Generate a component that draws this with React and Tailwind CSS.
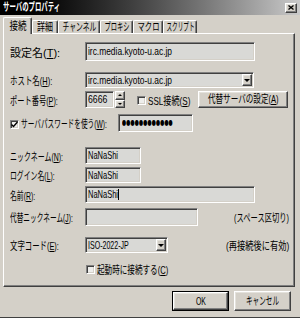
import React, { useLayoutEffect, useRef, useState } from "react";

function Fit({ w, children, className = "", origin = "left" }) {
  const ref = useRef(null);
  const [s, setS] = useState(1);
  useLayoutEffect(() => {
    const el = ref.current;
    if (el && el.offsetWidth) setS(w / el.offsetWidth);
  }, [w]);
  const o = origin === "left" ? "origin-left" : origin === "right" ? "origin-right" : "origin-center";
  return (
    <span ref={ref} className={`inline-block whitespace-nowrap ${o} ${className}`} style={{ transform: `scaleX(${s})` }}>
      {children}
    </span>
  );
}

const sunken =
  "border border-t-[#808080] border-l-[#808080] border-r-white border-b-white shadow-[inset_1px_1px_0_#404040,inset_-1px_-1px_0_#d4d0c8]";
const raised =
  "border border-t-white border-l-white border-r-[#404040] border-b-[#404040] shadow-[inset_-1px_-1px_0_#808080,inset_1px_1px_0_#e4e2dc]";
const field = "bg-[#d9d9d6]";

function U({ children }) {
  return <span className="underline underline-offset-1">{children}</span>;
}

function DownArrow() {
  return <span className="w-0 h-0 border-l-[3px] border-r-[3px] border-t-[3px] border-l-transparent border-r-transparent border-t-black" />;
}
function UpArrow() {
  return <span className="w-0 h-0 border-l-[2px] border-r-[2px] border-b-[2px] border-l-transparent border-r-transparent border-b-black" />;
}
function SmallDown() {
  return <span className="w-0 h-0 border-l-[2px] border-r-[2px] border-t-[2px] border-l-transparent border-r-transparent border-t-black" />;
}

function Check({ checked }) {
  return (
    <div className={`${sunken} w-[9px] h-[9px] bg-[#eeeeec] flex items-center justify-center`}>
      {checked && (
        <svg width="7" height="7" viewBox="0 0 7 7">
          <polyline points="0.5,3.5 2.5,5.5 6.5,1" fill="none" stroke="#000" strokeWidth="1.4" />
        </svg>
      )}
    </div>
  );
}

function Tab({ sel, w, tw, children }) {
  const width = {
    29: "w-[29px]",
    26: "w-[26px]",
    42: "w-[42px]",
    33: "w-[33px]",
    30: "w-[30px]",
    34: "w-[34px]",
  }[w];
  return (
    <div
      className={`${width} ${
        sel ? "h-[17px] -mb-[1px] relative z-10" : "h-[13px]"
      } bg-[#d4d0c8] border-t border-l border-r border-t-white border-l-white border-r-[#404040] shadow-[inset_-1px_0_0_#808080] rounded-t-[2px] flex items-center justify-center`}
    >
      <Fit w={tw} origin="center">
        {children}
      </Fit>
    </div>
  );
}

export default function App() {
  return (
    <div
      className="w-[300px] h-[318px] bg-[#d4d0c8] flex flex-col overflow-hidden border-b border-b-[#404040] text-[11px] text-black"
      style={{ fontFamily: '"Liberation Sans", "Noto Sans CJK JP", sans-serif' }}
    >
      {/* title bar */}
      <div className="h-[15px] flex items-center pl-[3px] pr-[3px] bg-gradient-to-r from-black to-[#cacaca]">
        <Fit w={57} className="text-white font-bold leading-none">
          サーバのプロパティ
        </Fit>
        <div className={`${raised} ml-auto w-[12px] h-[10px] bg-[#d4d0c8] flex items-center justify-center`}>
          <svg width="6" height="5" viewBox="0 0 6 5">
            <path d="M0.5 0.5 L5.5 4.5 M5.5 0.5 L0.5 4.5" stroke="#000" strokeWidth="1.3" />
          </svg>
        </div>
      </div>

      {/* tabs */}
      <div className="flex items-end h-[18px] pl-[3px]">
        <Tab sel w={29} tw={17}>接続</Tab>
        <Tab w={26} tw={16}>詳細</Tab>
        <Tab w={42} tw={34}>チャンネル</Tab>
        <Tab w={33} tw={25}>プロキシ</Tab>
        <Tab w={30} tw={22}>マクロ</Tab>
        <Tab w={34} tw={28}>スクリプト</Tab>
      </div>

      {/* panel */}
      <div className="ml-[3px] w-[292px] h-[254px] border border-t-white border-l-white border-r-[#404040] border-b-[#404040] shadow-[inset_-1px_-1px_0_#808080] flex flex-col pl-[6px] pr-[5px]">
        {/* 設定名 */}
        <div className="mt-[8px] h-[19px] flex items-center">
          <div className="w-[75px] pt-[3px]">
            <Fit w={50}>設定名(<U>T</U>):</Fit>
          </div>
          <div className={`${sunken} ${field} w-[170px] h-full flex items-center pl-[2px]`}>
            <Fit w={84}>irc.media.kyoto-u.ac.jp</Fit>
          </div>
        </div>

        {/* ホスト名 */}
        <div className="mt-[11px] h-[16px] flex items-center">
          <div className="w-[75px] pt-[3px]">
            <Fit w={42}>ホスト名(<U>H</U>):</Fit>
          </div>
          <div className={`${sunken} ${field} w-[169px] h-full flex items-center pl-[2px] pr-[1px]`}>
            <Fit w={84}>irc.media.kyoto-u.ac.jp</Fit>
            <div className={`${raised} ml-auto w-[10px] h-[12px] bg-[#d4d0c8] flex items-center justify-center`}>
              <DownArrow />
            </div>
          </div>
        </div>

        {/* ポート番号 */}
        <div className="mt-[3px] h-[17px] flex items-center">
          <div className="w-[75px] pt-[3px]">
            <Fit w={48}>ポート番号(<U>P</U>):</Fit>
          </div>
          <div className={`${sunken} ${field} w-[29px] h-full flex items-center pl-[2px]`}>
            <Fit w={19}>6666</Fit>
          </div>
          <div className="ml-[1px] w-[10px] h-full flex flex-col">
            <div className={`${raised} h-1/2 bg-[#d4d0c8] flex items-center justify-center`}>
              <UpArrow />
            </div>
            <div className={`${raised} h-1/2 bg-[#d4d0c8] flex items-center justify-center`}>
              <SmallDown />
            </div>
          </div>
          <div className="ml-[12px] pt-[2px]">
            <Check />
          </div>
          <div className="ml-[2px] w-[50px] pt-[3px]">
            <Fit w={42}>SSL接続(<U>S</U>)</Fit>
          </div>
          <div className={`${raised} w-[90px] h-[17px] bg-[#d4d0c8] flex items-center justify-center`}>
            <Fit w={71} origin="center">代替サーバの設定(<U>A</U>)</Fit>
          </div>
        </div>

        {/* パスワード */}
        <div className="mt-[6px] h-[18px] flex items-center">
          <div className="pt-[2px]">
            <Check checked />
          </div>
          <div className="ml-[2px] w-[97px] pt-[3px]">
            <Fit w={86}>サーバパスワードを使う(<U>W</U>):</Fit>
          </div>
          <div className={`${sunken} ${field} w-[75px] h-full flex items-center pl-[3px]`}>
            <Fit w={51} className="text-[8px] leading-none">
              <span style={{ fontFamily: '"DejaVu Sans", sans-serif' }}>●●●●●●●●●●●●</span>
            </Fit>
          </div>
        </div>

        {/* ニックネーム */}
        <div className="mt-[15px] h-[17px] flex items-center">
          <div className="w-[75px] pt-[3px]">
            <Fit w={53}>ニックネーム(<U>N</U>):</Fit>
          </div>
          <div className={`${sunken} ${field} w-[56px] h-full flex items-center pl-[2px]`}>
            <Fit w={30}>NaNaShi</Fit>
          </div>
        </div>

        {/* ログイン名 */}
        <div className="mt-[3px] h-[16px] flex items-center">
          <div className="w-[75px] pt-[3px]">
            <Fit w={45}>ログイン名(<U>L</U>):</Fit>
          </div>
          <div className={`${sunken} ${field} w-[56px] h-full flex items-center pl-[2px]`}>
            <Fit w={30}>NaNaShi</Fit>
          </div>
        </div>

        {/* 名前 */}
        <div className="mt-[3px] h-[17px] flex items-center">
          <div className="w-[75px] pt-[3px]">
            <Fit w={25}>名前(<U>R</U>):</Fit>
          </div>
          <div className={`${sunken} ${field} w-[170px] h-full flex items-center pl-[2px]`}>
            <span className="w-[30px] inline-block">
              <Fit w={30}>NaNaShi</Fit>
            </span>
            <span className="w-px h-[11px] bg-black" />
          </div>
        </div>

        {/* 代替ニックネーム */}
        <div className="mt-[5px] h-[18px] flex items-center">
          <div className="w-[75px] pt-[3px]">
            <Fit w={63}>代替ニックネーム(<U>J</U>):</Fit>
          </div>
          <div className={`${sunken} ${field} w-[113px] h-full`} />
          <div className="ml-auto pt-[3px]">
            <Fit w={55} origin="right">(スペース区切り)</Fit>
          </div>
        </div>

        {/* 文字コード */}
        <div className="mt-[11px] h-[16px] flex items-center">
          <div className="w-[75px] pt-[3px]">
            <Fit w={49}>文字コード(<U>E</U>):</Fit>
          </div>
          <div className={`${sunken} ${field} w-[83px] h-full flex items-center pl-[2px] pr-[1px]`}>
            <Fit w={41}>ISO-2022-JP</Fit>
            <div className={`${raised} ml-auto w-[10px] h-[12px] bg-[#d4d0c8] flex items-center justify-center`}>
              <DownArrow />
            </div>
          </div>
          <div className="ml-auto pt-[3px]">
            <Fit w={63} origin="right">(再接続後に有効)</Fit>
          </div>
        </div>

        {/* 起動時に接続する */}
        <div className="mt-[11px] h-[10px] flex items-center">
          <div className="ml-[76px]">
            <Check />
          </div>
          <div className="ml-[2px] pt-[2px]">
            <Fit w={71}>起動時に接続する(<U>C</U>)</Fit>
          </div>
        </div>
      </div>

      {/* buttons */}
      <div className="mt-[4px] flex pl-[172px] gap-[5px]">
        <div className="w-[57px] h-[20px] border border-black">
          <div className={`${raised} w-full h-full bg-[#d4d0c8] flex items-center justify-center`}>
            <Fit w={10} origin="center">OK</Fit>
          </div>
        </div>
        <div className={`${raised} w-[57px] h-[20px] bg-[#d4d0c8] flex items-center justify-center`}>
          <Fit w={33} origin="center">キャンセル</Fit>
        </div>
      </div>
    </div>
  );
}
